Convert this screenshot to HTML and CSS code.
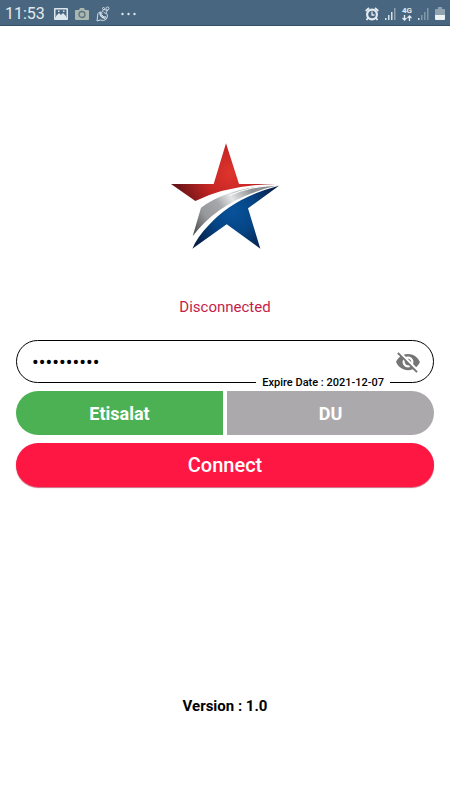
FILE: index.html
```html
<!DOCTYPE html>
<html lang="en">
<head>
<meta charset="utf-8">
<meta name="viewport" content="width=device-width, initial-scale=1">
<title>Connect</title>
<link rel="stylesheet" href="styles.css">
</head>
<body>
<header class="status">
  <div class="status-group">
    <time class="clock">11:53</time>
    <svg width="14" height="14" viewBox="0 0 14 14" aria-hidden="true"><path fill="#dce6ee" fill-rule="evenodd" d="M1 1h12q1 0 1 1v10q0 1-1 1H1q-1 0-1-1V2q0-1 1-1zM1.500 2.500v8h11v-8zM2 10.500V9l3-3 2 2 2-2 3 3v1.500zM4 3.500h1.500V5H4zM9 3.500h1.500V5H9z"/></svg>
    <svg width="14" height="14" viewBox="0 0 14 14" aria-hidden="true"><path fill="#a9b7b0" d="M1 3h3l1-2h4l1 2h3q1 0 1 1v8q0 1-1 1H1q-1 0-1-1V4q0-1 1-1z"/><circle cx="7" cy="7.500" r="3" fill="#a9b7b0" stroke="#5d7480" stroke-width="1.300"/></svg>
    <svg width="14" height="16" viewBox="0 0 14 16" fill="none" stroke="#d0dce5" aria-hidden="true"><path d="M4 5.500Q1 7 1.500 11L1 15l3-1q4 1.500 6.500-1 2-3 0-6"/><path stroke-width="1.600" d="M4 6q-.5 4.500 5 6.500"/><path d="M4 6l2 1-.5 1.500 2.500 2.500 1.500-.5.500 2M6 6l1.500-2.500L12 4.500M7.500 6l2 1.500 2-3"/><circle cx="7.500" cy="2.500" r="1"/><circle cx="11.500" cy="2.500" r="1.500"/></svg>
    <svg class="more" width="16" height="14" viewBox="0 0 16 14" fill="#dce6ee" aria-hidden="true"><circle cx="1.500" cy="7" r="1.200"/><circle cx="7.500" cy="7" r="1.200"/><circle cx="13.500" cy="7" r="1.200"/></svg>
  </div>
  <div class="status-group status-right">
    <svg width="14" height="14" viewBox="0 0 14 14" fill="none" stroke="#e3ebf0" aria-hidden="true"><circle cx="7" cy="7.500" r="4.900" stroke-width="2.200"/><path stroke-width="1.300" d="M7 4.500v3.500h2.500"/><path stroke-width="1.800" d="M.7 4L4 1M13.300 4L10 1M3 11l-1.500 2M11 11l1.500 2"/></svg>
    <svg width="13" height="14" viewBox="0 0 13 14" aria-hidden="true"><path fill="#d5e0e7" d="M1 11h1.500v2H1zM4 8h1.500v5H4zM7 5h1.500v8H7z"/><path fill="#8ea1b0" d="M10 1h1.500v12H10z"/></svg>
    <span class="network">4G<svg width="10" height="6" viewBox="0 0 10 6" fill="none" stroke="#e3ebf0" stroke-width="1.300" aria-hidden="true"><path d="M2.500 0v5M.5 3l2 2 2-2M7.500 6V1M5.500 3l2-2 2 2"/></svg></span>
    <svg width="13" height="14" viewBox="0 0 13 14" aria-hidden="true"><path fill="#d5e0e7" d="M1 11h1.500v2H1z"/><path fill="#8297a8" d="M4 8h1.500v5H4zM7 5h1.500v8H7zM10 1h1.500v12H10z"/></svg>
    <svg width="10" height="14" viewBox="0 0 10 14" aria-hidden="true"><path fill="#91a2b0" d="M3 0h4v2h2q1 0 1 1v5H0V3q0-1 1-1h2z"/><path fill="#edf2f5" d="M0 8h10v4q0 1-1 1H1q-1 0-1-1z"/></svg>
  </div>
</header>
<main class="screen">
  <svg class="logo" viewBox="0 0 390 375" role="img" aria-label="Star logo">
    <defs>
      <radialGradient id="red" gradientUnits="userSpaceOnUse" cx="210" cy="115" r="165"><stop offset="0" stop-color="#df342d"/><stop offset=".45" stop-color="#c52624"/><stop offset="1" stop-color="#691416"/></radialGradient>
      <linearGradient id="silver" gradientUnits="userSpaceOnUse" x1="100" y1="280" x2="270" y2="160"><stop offset="0" stop-color="#55575a"/><stop offset=".25" stop-color="#96989b"/><stop offset=".5" stop-color="#a5a7aa"/><stop offset=".7" stop-color="#e4e5e6"/><stop offset="1" stop-color="#8f9294"/></linearGradient>
      <radialGradient id="blue" gradientUnits="userSpaceOnUse" cx="220" cy="230" r="145"><stop offset="0" stop-color="#07529a"/><stop offset=".45" stop-color="#064585"/><stop offset="1" stop-color="#071c46"/></radialGradient>
    </defs>
    <path fill="url(#red)" d="M198 25L237 147H348Q205 149 106 198L33 147H161Z"/>
    <path fill="url(#silver)" d="M355 151Q210 154 123 218L98 304Q181 191 355 151Z"/>
    <path fill="none" stroke="#fff" stroke-width="3" d="M350 151Q270 153 210 181"/>
    <path fill="url(#blue)" d="M357 152L264 220L301 341L200 268L97 341Q113 305 146 271Q219 188 357 152Z"/>
  </svg>
  <p class="state">Disconnected</p>
  <form class="panel">
    <div class="field">
      <input class="code" type="password" value="1234567890" aria-label="Access code">
      <button class="reveal" type="button" aria-label="Show code">
        <svg width="26" height="26" viewBox="0 0 24 24" fill="#757575" aria-hidden="true"><path d="M12 7c2.760 0 5 2.240 5 5 0 .65-.13 1.260-.36 1.830l2.920 2.920c1.510-1.260 2.700-2.890 3.430-4.750-1.730-4.390-6-7.500-11-7.500-1.400 0-2.740.25-3.980.7l2.160 2.160C10.740 7.130 11.350 7 12 7zM2 4.270l2.280 2.280.46.46C3.080 8.300 1.780 10.020 1 12c1.730 4.390 6 7.500 11 7.500 1.550 0 3.030-.3 4.380-.84l.42.42L19.730 22 21 20.730 3.270 3 2 4.270zM7.530 9.800l1.550 1.550c-.05.21-.08.43-.08.65 0 1.660 1.340 3 3 3 .22 0 .44-.03.65-.08l1.550 1.550c-.67.33-1.410.53-2.200.53-2.760 0-5-2.240-5-5 0-.79.2-1.530.53-2.200zm4.310-.78l3.150 3.150.02-.16c0-1.660-1.340-3-3-3l-.17.01z"/></svg>
      </button>
      <span class="expiry">Expire Date : 2021-12-07</span>
    </div>
    <div class="carriers">
      <button class="carrier selected" type="button" aria-pressed="true">Etisalat</button>
      <button class="carrier" type="button" aria-pressed="false">DU</button>
    </div>
    <button class="connect" type="button">Connect</button>
  </form>
  <footer class="version">Version : 1.0</footer>
</main>
</body>
</html>
```
FILE: styles.css
```css
* { box-sizing: border-box; }
body {
  margin: 0;
  min-height: 100vh;
  display: flex;
  flex-direction: column;
  background: #fff;
  color: #000;
  font-family: Roboto, sans-serif;
}
button, input { font: inherit; }
button { border: 0; padding: 0; cursor: pointer; }
.status {
  display: flex;
  justify-content: space-between;
  align-items: center;
  height: 26px;
  padding: 2px 5px 0;
  background: #48667f;
  border-bottom: 1px solid #34526c;
  color: #e3ebf0;
}
.status-group { display: flex; align-items: center; gap: 7px; }
.status-right { gap: 5px; }
.clock { font-size: 16px; line-height: 24px; margin-right: 2px; }
.more { margin-left: 4px; }
.network {
  display: flex;
  flex-direction: column;
  align-items: center;
  font-size: 8px;
  line-height: 8px;
  font-weight: 700;
}
.screen {
  flex: 1;
  display: flex;
  flex-direction: column;
  padding: 109px 16px 84px;
}
.logo { width: 130px; align-self: center; }
.state {
  margin: 37px 0 23px;
  text-align: center;
  font-size: 15px;
  line-height: 20px;
  color: #c41e4b;
}
.panel { display: flex; flex-direction: column; gap: 8px; }
.field {
  position: relative;
  display: flex;
  align-items: center;
  height: 43px;
  padding: 0 12px 0 15px;
  border: 1px solid #000;
  border-radius: 22px;
}
.code {
  flex: 1;
  min-width: 0;
  padding: 0;
  border: 0;
  outline: 0;
  background: none;
  color: #000;
  font-size: 20px;
}
.reveal { display: flex; background: none; }
.expiry {
  position: absolute;
  right: 43px;
  bottom: -8px;
  padding: 0 6px;
  background: #fff;
  font-size: 11px;
  line-height: 14px;
  font-weight: 500;
}
.carriers { display: grid; grid-template-columns: 1fr 1fr; gap: 4px; }
.carrier {
  height: 44px;
  border-radius: 0 22px 22px 0;
  background: #aba9ac;
  color: #fff;
  font-size: 18px;
  font-weight: 700;
}
.carrier.selected { border-radius: 22px 0 0 22px; background: #4bb153; }
.connect {
  height: 44px;
  border-radius: 22px;
  background: #ff1744;
  color: #fff;
  font-size: 20px;
  font-weight: 500;
  box-shadow: 0 1px 1px #c96a7d;
}
.version {
  margin-top: auto;
  text-align: center;
  font-size: 15px;
  line-height: 20px;
  font-weight: 700;
}
```
